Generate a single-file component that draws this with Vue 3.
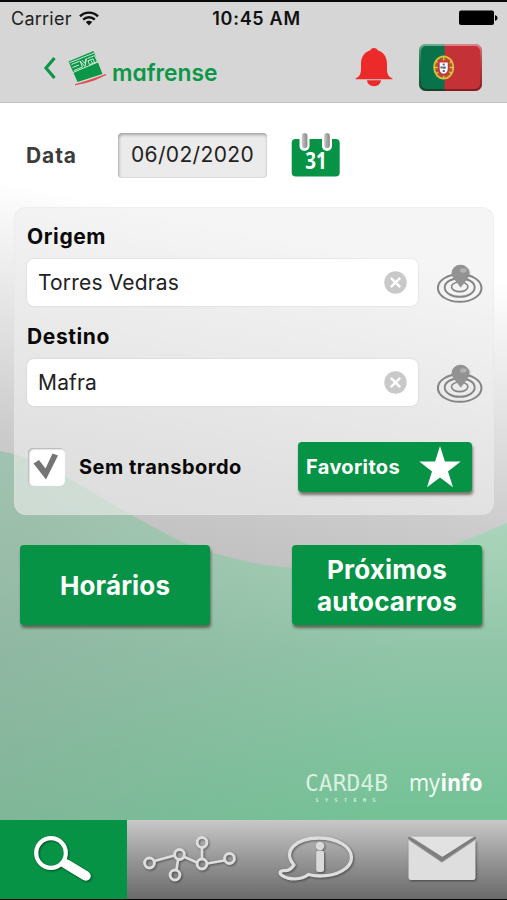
<script setup>
import { ref } from 'vue'

const date = ref('06/02/2020')
const stops = ref([
  { label: 'Origem', value: 'Torres Vedras' },
  { label: 'Destino', value: 'Mafra' },
])
const direct = ref(true)
</script>

<template>
  <div class="screen">
    <header class="header">
      <div class="status">
        <div class="carrier">
          <span>Carrier</span>
          <svg width="20" height="15" viewBox="0 0 20 15" fill="none" stroke="#111" stroke-width="2.4">
            <path d="M1 5.4C6 .4 14 .4 19 5.4" />
            <path d="M4.2 8.7C7.4 5.5 12.6 5.5 15.8 8.7" />
            <path d="M6.8 11.1Q10 8.4 13.2 11.1L10 14.6Z" fill="#111" stroke="none" />
          </svg>
        </div>
        <span class="time">10:45 AM</span>
        <svg class="battery" width="39" height="16" viewBox="0 0 39 16">
          <rect x="0" y="0.5" width="35" height="14.500" rx="2" />
          <path d="M36 5Q38.6 6 38.6 8T36 11Z" />
        </svg>
      </div>
      <div class="nav">
        <svg class="back" width="14" height="24" viewBox="0 0 14 24">
          <path d="M11.5 2L3 12L11.5 22" fill="none" stroke="#0b9747" stroke-width="3.200" />
        </svg>
        <svg class="brand" width="160" height="48" viewBox="0 0 160 48">
          <path d="M1.5 13.5L26.5 3L35.500 26L10.5 34Z" fill="#0b9747" />
          <g fill="none" stroke="#d3ead9" stroke-width="1">
            <path d="M2.500 14.800L27 5M6 24.500L31 14" />
            <path d="M4.500 16.500L12.500 13.200M5.500 19.500L12 17M7 22.500L15.500 19L13 13L18 18.500L19.500 10.500M15 12.200L18 15.500L18.800 10.700M20.500 10.500L27.500 7.600L30.500 13.500L22.500 16.700L21 12.800L26 10.800L27.600 14.700M24 12.500L25.500 15.500" />
          </g>
          <path d="M8 36.800Q22 32.600 39 26.500Q28 32.800 17 35Q12 35.800 8 36.800Z" fill="#e44a50" stroke="#e44a50" stroke-width=".9" />
          <text x="45" y="33" textLength="105.500" lengthAdjust="spacingAndGlyphs" class="brandname">mafrense</text>
        </svg>
        <svg class="bell" width="38" height="40" viewBox="0 0 38 40" fill="#ec2a2a">
          <path d="M19 1C21 1 22.300 2 22.600 3.200C28 4.700 32 9.500 32 16.500V22C32 27 33.500 29.500 37.500 31.500V32.300H.5V31.500C4.500 29.500 6 27 6 22V16.500C6 9.500 10 4.700 15.400 3.200C15.700 2 17 1 19 1Z" />
          <path d="M12 33.300H26C25.500 37 23 39.200 19 39.200S12.500 37 12 33.300Z" />
        </svg>
        <svg class="flag" width="64" height="48" viewBox="0 0 64 48">
          <defs>
            <clipPath id="flagclip"><rect x="0" y="0" width="63" height="47" rx="6.500" /></clipPath>
            <linearGradient id="flagedge" x1="0" y1="0" x2="0" y2="1">
              <stop offset="0" stop-color="#fff" stop-opacity=".4" />
              <stop offset=".5" stop-color="#555" stop-opacity=".15" />
              <stop offset="1" stop-color="#300" stop-opacity=".45" />
            </linearGradient>
          </defs>
          <g clip-path="url(#flagclip)">
            <rect width="26" height="48" fill="#08734a" />
            <rect x="25.500" width="38" height="48" fill="#c43137" />
          </g>
          <rect x="1" y="1" width="61" height="45" rx="6" fill="none" stroke="url(#flagedge)" stroke-width="2" />
          <ellipse cx="24.700" cy="23.500" rx="9.600" ry="11.200" fill="#a65c2c" stroke="#d9bd3d" stroke-width="1.800" />
          <path d="M15 23.500H34M17 17L33 30M17 30L33 17M24.700 12V35" stroke="#dfc34c" stroke-width="1.300" />
          <path d="M18.800 16.500H30.600V25Q30.600 31 24.700 32Q18.800 31 18.800 25Z" fill="#c93638" />
          <path d="M20.700 18.500H28.700V25Q28.700 29 24.700 29.800Q20.700 29 20.700 25Z" fill="#fff" />
          <path d="M24.700 19.500V28.500M21.500 23.500H28" stroke="#41679b" stroke-width="2" stroke-dasharray="2 1.300" />
        </svg>
      </div>
    </header>

    <main class="content">
      <svg class="backdrop" width="507" height="717" viewBox="0 103 507 717" preserveAspectRatio="none">
        <defs>
          <linearGradient id="sky" gradientUnits="userSpaceOnUse" x1="0" y1="180" x2="-80" y2="580">
            <stop offset="0" stop-color="#fff" />
            <stop offset=".12" stop-color="#f4f4f4" />
            <stop offset=".6" stop-color="#cdcccc" />
            <stop offset="1" stop-color="#b8b6b6" />
          </linearGradient>
          <linearGradient id="hill" gradientUnits="userSpaceOnUse" x1="0" y1="450" x2="0" y2="820">
            <stop offset="0" stop-color="#b6dcc6" />
            <stop offset=".28" stop-color="#a5d1b7" />
            <stop offset=".55" stop-color="#90c5a8" />
            <stop offset="1" stop-color="#74c296" />
          </linearGradient>
          <linearGradient id="shade" gradientUnits="userSpaceOnUse" x1="0" y1="640" x2="400" y2="720">
            <stop offset="0" stop-color="#8ea99b" stop-opacity=".5" />
            <stop offset="1" stop-color="#8ea99b" stop-opacity="0" />
          </linearGradient>
        </defs>
        <rect y="103" width="507" height="717" fill="url(#sky)" />
        <path d="M0 451C45 458 92 494 135 517C180 541 190 549 254 563C345 579 420 562 507 523V820H0Z" fill="url(#hill)" />
        <path d="M0 451C45 458 92 494 135 517C180 541 190 549 254 563C345 579 420 562 507 523V820H0Z" fill="url(#shade)" />
      </svg>

      <div class="date-row">
        <span class="date-label">Data</span>
        <div class="date-box">{{ date }}</div>
        <svg class="calendar" width="50" height="46" viewBox="0 0 50 46">
          <defs>
            <linearGradient id="ring" x1="0" x2="1" y1="0" y2="0">
              <stop offset="0" stop-color="#c9c9c9" /><stop offset="1" stop-color="#858585" />
            </linearGradient>
          </defs>
          <rect x=".7" y="7" width="48" height="37.500" rx="4" fill="#079345" />
          <rect x="8.500" y="1" width="10" height="18" rx="5" fill="#fff" />
          <rect x="31" y="1" width="10" height="18" rx="5" fill="#fff" />
          <rect x="10.800" y="1" width="5.600" height="15" rx="2.800" fill="url(#ring)" />
          <rect x="33.200" y="1" width="5.600" height="15" rx="2.800" fill="url(#ring)" />
          <text x="14.300" y="37.300" textLength="21.500" lengthAdjust="spacingAndGlyphs" class="day">31</text>
        </svg>
      </div>

      <section class="card">
        <template v-for="stop in stops" :key="stop.label">
          <h2 class="field-label">{{ stop.label }}</h2>
          <div class="field-row">
            <div class="field">
              <span>{{ stop.value }}</span>
              <svg width="23" height="23" viewBox="0 0 23 23">
                <circle cx="11.500" cy="11.500" r="11.200" fill="#c9c9c9" />
                <path d="M6.800 6.800L16.200 16.200M16.200 6.800L6.800 16.200" stroke="#fff" stroke-width="2.400" />
              </svg>
            </div>
            <svg class="locate" width="46" height="40" viewBox="0 0 46 40">
              <g fill="none" stroke="#858585">
                <ellipse cx="22.700" cy="24" rx="21.800" ry="13.800" stroke-width="2" />
                <ellipse cx="22.700" cy="23.500" rx="15" ry="9.300" stroke-width="1.900" />
                <ellipse cx="22.700" cy="22.800" rx="8.200" ry="4.800" stroke-width="1.600" />
              </g>
              <path d="M24 24L33 12Q35 6 31 4L24 15Z" fill="#777" opacity=".22" />
              <path d="M23.500 23.500Q21.500 20.500 17.500 15.800Q14.500 12.500 14.500 9.300A9 8.500 0 0 1 32.500 9.300Q32.500 12.500 29.600 15.800Q26 20.500 23.500 23.500Z" fill="#929292" />
              <ellipse cx="26.300" cy="6.500" rx="3.300" ry="2.200" fill="#b2b2b2" />
            </svg>
          </div>
        </template>
        <div class="options">
          <div class="check">
            <svg v-if="direct" width="37" height="38" viewBox="0 0 37 38">
              <path d="M5.500 15.500L11 12L17.500 20.500L24.500 5.500L30 7.500L18 31.500Z" fill="#747474" />
            </svg>
          </div>
          <span class="check-label">Sem transbordo</span>
          <button class="fav">
            <span>Favoritos</span>
            <svg width="42" height="42" viewBox="0 0 42 42">
              <path d="M21 0L25.900 15.600H41.700L29 25.400L34 41.300L21 31.600L8 41.300L13 25.400L.3 15.600H16.100Z" fill="#fff" />
            </svg>
          </button>
        </div>
      </section>

      <div class="actions">
        <button class="action">Horários</button>
        <button class="action">Próximos<br>autocarros</button>
      </div>

      <div class="credits">
        <svg width="84" height="44" viewBox="0 0 84 44">
          <defs>
            <pattern id="dots" width="2.200" height="2.200" patternUnits="userSpaceOnUse">
              <rect width="2.200" height="2.200" fill="#fff" fill-opacity=".5" />
              <circle cx="1.100" cy="1.100" r=".9" fill="#effff2" />
            </pattern>
          </defs>
          <text x="0" y="25" textLength="83" lengthAdjust="spacingAndGlyphs" class="card4b">CARD4B</text>
          <text x="10.500" y="35.500" textLength="60" class="systems">SYSTEMS</text>
        </svg>
        <svg class="myinfo" width="80" height="50" viewBox="0 -6 80 50">
          <text x="0" y="24.500" textLength="31" lengthAdjust="spacingAndGlyphs" class="my">my</text>
          <text x="31.500" y="24.500" textLength="42" lengthAdjust="spacingAndGlyphs" class="info">info</text>
        </svg>
      </div>
    </main>

    <nav class="tabs">
      <div class="tab active">
        <svg width="127" height="79" viewBox="0 0 127 79">
          <g class="raised">
            <circle cx="51" cy="33" r="14.800" fill="none" stroke="#fff" stroke-width="4.200" />
            <path d="M63.500 42.500L86 56" stroke="#fff" stroke-width="9.500" />
            <path d="M68 45L86 56" stroke="#fff" stroke-width="9.500" stroke-linecap="round" />
          </g>
        </svg>
      </div>
      <div class="tab">
        <svg width="127" height="79" viewBox="0 0 127 79">
          <g class="raised" fill="none" stroke="#dedede" stroke-width="3">
            <path d="M27.500 41L47.500 35.500M57.500 37L70 42.500M51 40L49.500 50M75 28V38M80.500 43.500L97.500 40.500" stroke-width="2.700" />
            <circle cx="22.500" cy="43" r="4.900" />
            <circle cx="52.500" cy="34.500" r="4.900" />
            <circle cx="48" cy="55" r="4.900" />
            <circle cx="75" cy="22.500" r="4.900" />
            <circle cx="75" cy="44" r="4.900" />
            <circle cx="102.500" cy="38.500" r="4.900" />
          </g>
        </svg>
      </div>
      <div class="tab">
        <svg width="127" height="79" viewBox="0 0 127 79">
          <g class="raised">
            <path d="M40 45C28 31 42 18 65 18C84 18 97.500 27 97.500 37.500C97.500 48.500 83 56 66 56Q60 56 54.500 54.500C47 60 36 60.500 28 55.500C25 53 26 50.500 30.500 50.700Q36 51 40 45Z" fill="none" stroke="#dedede" stroke-width="3.300" stroke-linejoin="round" />
            <circle cx="66" cy="26" r="4.300" fill="#dadada" />
            <rect x="62.200" y="30.500" width="7.800" height="21.500" rx="2.500" fill="#dadada" />
          </g>
        </svg>
      </div>
      <div class="tab">
        <svg width="126" height="79" viewBox="0 0 126 79">
          <g class="raised" fill="#dedede">
            <path d="M27.500 20L61 42.500L94.500 20V57.500Q94.500 60 92 60H30Q27.500 60 27.500 57.500Z" />
            <path d="M29.500 16.500H93.500L61.500 37Z" fill="#e2e2e2" />
          </g>
          <path d="M27.500 17.500L61.200 39.800L94.500 17.500" fill="none" stroke="#7e7e7e" stroke-width="2.600" />
        </svg>
      </div>
    </nav>
  </div>
</template>

<style>
body {
  background: #080808;
}
</style>

<style scoped>
.screen {
  box-sizing: border-box;
  width: 507px;
  height: 900px;
  padding: 2px 0 1px;
  display: flex;
  flex-direction: column;
  background: #080808;
  font-family: Inter, 'Liberation Sans', sans-serif;
  overflow: hidden;
}
svg {
  display: block;
  flex: none;
}
.header {
  box-sizing: border-box;
  height: 101px;
  flex: none;
  background: #d6d6d6;
  border-bottom: 1px solid #c3c3c3;
}
.status {
  display: grid;
  grid-template-columns: 1fr auto 1fr;
  height: 33px;
  align-items: center;
  padding: 0 9px 0 15px;
}
.carrier {
  display: flex;
  gap: 7px;
  align-items: center;
  margin-left: -4px;
  font-size: 18px;
  letter-spacing: 0.25px;
  color: #222;
}
.time {
  font-size: 18px;
  font-weight: 600;
  letter-spacing: 0.7px;
  color: #111;
}
.battery {
  justify-self: end;
  margin-top: -2px;
}
.nav {
  display: flex;
  align-items: flex-start;
  padding-left: 43px;
}
.back {
  margin-top: 21px;
}
.brand {
  margin: 13px 0 0 10px;
}
.brandname {
  font: 600 24px Inter, sans-serif;
  font-feature-settings: 'cv11' 1;
  fill: #0b9747;
}
.bell {
  margin: 12px 0 0 128px;
}
.flag {
  margin: 9px 0 0 26px;
}
.content {
  position: relative;
  height: 717px;
  flex: none;
  display: flex;
  flex-direction: column;
  z-index: 0;
}
.backdrop {
  position: absolute;
  inset: 0;
  z-index: -1;
}
.date-row {
  display: flex;
  align-items: center;
  padding: 29px 0 0 26px;
  height: 46px;
}
.date-label {
  width: 92px;
  font-size: 21px;
  font-weight: 700;
  letter-spacing: 0.9px;
  color: #3c3c3c;
}
.date-box {
  box-sizing: border-box;
  width: 149px;
  height: 45px;
  line-height: 43px;
  text-align: center;
  border-radius: 4px;
  background: #ebebeb;
  box-shadow: inset 1px 2px 3px rgba(0, 0, 0, 0.3), inset -1px -1px 1px rgba(0, 0, 0, 0.06);
  font-size: 21px;
  letter-spacing: 0.35px;
  color: #222;
}
.calendar {
  margin-left: 24px;
  margin-top: -1px;
}
.day {
  font: 700 23px 'Noto Sans', sans-serif;
  fill: #fff;
}
.card {
  box-sizing: border-box;
  margin: 29px 13px 0 14px;
  height: 308px;
  padding: 14px 10px 0 12px;
  border: 1px solid rgba(225, 225, 225, 0.35);
  border-radius: 12px;
  background: rgba(239, 239, 239, 0.6);
}
.field-label {
  margin: 0;
  height: 30px;
  line-height: 30px;
  font-size: 21px;
  font-weight: 700;
  letter-spacing: 0.6px;
  color: #080808;
}
.field-row {
  display: flex;
  align-items: flex-start;
  justify-content: space-between;
  height: 47px;
  margin: 7px 0 16px;
}
.field {
  box-sizing: border-box;
  width: 391px;
  height: 47px;
  padding: 0 11px 0 11px;
  display: flex;
  align-items: center;
  justify-content: space-between;
  border-radius: 7px;
  background: #fff;
  box-shadow: 0 0 2px rgba(0, 0, 0, 0.15);
  font-size: 21px;
  letter-spacing: 0.17px;
  color: #222;
}
.locate {
  margin-top: 5px;
}
.options {
  display: flex;
  align-items: center;
  height: 50px;
  margin-top: 36px;
}
.check {
  width: 37px;
  height: 38px;
  margin-left: 1px;
  border-radius: 5px;
  background: #fff;
  box-shadow: inset 1px 1px 2px rgba(0, 0, 0, 0.35);
}
.check-label {
  margin-left: 14px;
  width: 219px;
  font-size: 20px;
  font-weight: 700;
  letter-spacing: 0.5px;
  color: #080808;
  white-space: nowrap;
}
button {
  border: 0;
  font-family: inherit;
  color: #fff;
  background: #079345;
  box-shadow: 1px 3px 3px rgba(50, 50, 30, 0.6);
}
.fav {
  width: 174px;
  height: 50px;
  flex: none;
  padding: 0 11px 0 8px;
  display: flex;
  align-items: center;
  justify-content: space-between;
  border-radius: 4px;
  font-size: 20px;
  font-weight: 700;
  letter-spacing: 0.35px;
}
.actions {
  display: flex;
  justify-content: space-between;
  padding: 30px 25px 0 20px;
}
.action {
  width: 190px;
  height: 80px;
  padding: 1px 0 0;
  border-radius: 4px;
  font-size: 26px;
  font-weight: 700;
  letter-spacing: 0.15px;
  line-height: 32px;
}
.credits {
  display: flex;
  justify-content: flex-end;
  align-items: flex-end;
  gap: 20px;
  margin: auto 18px 10px 0;
}
.card4b {
  font: 400 23px 'DejaVu Sans Mono', monospace;
  fill: url(#dots);
}
.systems {
  font: 700 5px 'DejaVu Sans Mono', monospace;
  fill: #d3f0dd;
}
.my {
  font: 400 24px 'Open Sans', sans-serif;
  fill: #f0fff4;
}
.info {
  font: 700 24px 'Open Sans', sans-serif;
  fill: #fff;
}
.tabs {
  display: grid;
  grid-template-columns: 127px 127px 127px 126px;
  height: 79px;
  flex: none;
  background: linear-gradient(#c8c8c8, #979797 50%, #6a6a6a);
}
.active {
  background: #079345;
}
.raised {
  filter: drop-shadow(1px 1.5px 1px rgba(0, 0, 0, 0.45));
}
</style>
